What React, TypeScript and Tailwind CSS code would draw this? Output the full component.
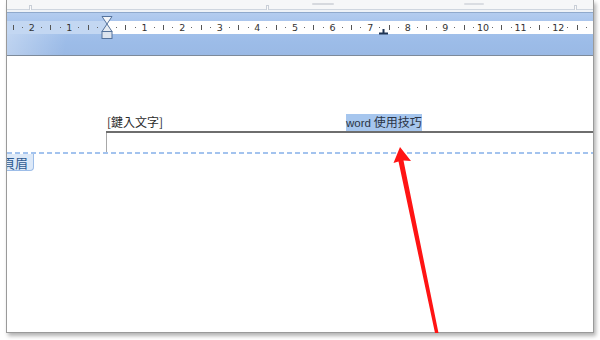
import React from "react";

const UNIT = 37.6;
const ORIGIN = 100; // relative to frame left edge

type Mark = { x: number; kind: "num" | "bar" | "dot"; label?: string };

function buildMarks(): Mark[] {
  const marks: Mark[] = [];
  for (let q = -11; q <= 52; q++) {
    if (q === 0) continue;
    const x = ORIGIN + (q * UNIT) / 4;
    if (x < 2 || x > 584) continue;
    const r = ((q % 4) + 4) % 4;
    if (r === 0) marks.push({ x, kind: "num", label: String(Math.abs(q / 4)) });
    else if (r === 2) marks.push({ x, kind: "bar" });
    else marks.push({ x, kind: "dot" });
  }
  return marks;
}

function Ruler() {
  const marks = buildMarks();
  return (
    <div className="h-[43px] flex flex-col bg-[linear-gradient(180deg,#b3ccef_0%,#a6c3ec_30%,#9cbce8_70%,#9ab9e5_100%)] border-b border-[#7d8a9a]">
      <div className="h-[8px]" />
      <div className="relative h-[13px] flex">
        <div className="w-[100px] bg-[#c3d7f2]" />
        <div className="flex-1 bg-white" />
        {marks.map((m, i) => (
          <div
            key={i}
            className="absolute top-0 h-[13px] w-[12px] -ml-[6px] flex items-center justify-center"
            style={{ left: m.x }}
          >
            {m.kind === "num" && (
              <span className="text-[9.5px] leading-none text-[#333] font-['DejaVu_Sans',sans-serif]">
                {m.label}
              </span>
            )}
            {m.kind === "bar" && <div className="w-px h-[5px] bg-[#555]" />}
            {m.kind === "dot" && <div className="w-px h-px bg-[#666]" />}
          </div>
        ))}
        {/* hanging indent marker */}
        <svg
          className="absolute top-[-5px] left-[94px]"
          width="12"
          height="24"
          viewBox="0 0 12 24"
        >
          <path d="M1 0.5 H11 L6 8 Z" fill="#f4f6f9" stroke="#55739c" strokeWidth="1" />
          <path d="M6 8 L11 15.5 H1 Z" fill="#e6ebf2" stroke="#55739c" strokeWidth="1" />
          <rect x="1" y="15.5" width="10" height="7" fill="#dde4ee" stroke="#55739c" strokeWidth="1" />
        </svg>
        {/* tab stop marker */}
        <svg className="absolute top-[8px] left-[372px]" width="9" height="6" viewBox="0 0 9 6">
          <rect x="3.5" y="0" width="2" height="4" fill="#1f3555" />
          <rect x="0" y="3.5" width="9" height="2" fill="#1f3555" />
        </svg>
      </div>
      <div className="flex-1 bg-[linear-gradient(100deg,rgba(255,255,255,0.35)_0px,rgba(255,255,255,0)_60px)]" />
    </div>
  );
}

function TopStrip() {
  const notches = [22, 259, 567];
  return (
    <div className="relative h-[13px] bg-[#f6f7f8] flex flex-col">
      <div className="h-[9px]" />
      <div className="h-px bg-[#cfd6df]" />
      <div className="flex-1 bg-[#eef2f7] border-b border-[#8fa9cc]" />
      {notches.map((x) => (
        <div
          key={x}
          className="absolute top-[5px] w-[3px] h-[5px] border border-b-0 border-[#c9cfd7] bg-[#fafafa]"
          style={{ left: x }}
        />
      ))}
      <div className="absolute top-[3px] left-[305px] w-[22px] h-[2px] rounded bg-[#d6d9de]" />
      <div className="absolute top-[3px] left-[457px] w-[20px] h-[2px] rounded bg-[#dadde2]" />
    </div>
  );
}

export default function App() {
  return (
    <div className="relative w-[600px] h-[340px] bg-white overflow-hidden font-['Liberation_Sans','Noto_Sans_CJK_TC',sans-serif]">
      <div className="ml-[6px] w-[588px] h-[333px] flex flex-col border-l border-r border-b border-[#9a9a9a] shadow-[2px_3px_4px_rgba(0,0,0,0.3)] bg-white">
        <TopStrip />
        <Ruler />
        <div className="flex-1 flex flex-col pt-[58px]">
          <div className="flex h-[16px] items-center pl-[100px] text-[12px] text-[#2b2b2b] font-['Noto_Sans_CJK_TC',sans-serif]">
            <div className="w-[239px] leading-[16px]">[鍵入文字]</div>
            <div className="bg-[#a6c6ee] leading-[16px] text-[#2a3445]">
              <span className="font-['Liberation_Sans',sans-serif] text-[11.5px]">word</span> 使用技巧
            </div>
          </div>
          <div className="ml-[99px] mt-px h-[2px] bg-[#6e6e6e]" />
          <div className="ml-[99px] w-px h-[19px] bg-[#a8a8a8]" />
          <div className="h-[2px] bg-[repeating-linear-gradient(90deg,#a3c3ee_0px,#a3c3ee_5px,#ffffff_5px,#ffffff_8px)]" />
          <div className="w-[27px] h-[17px] overflow-hidden bg-[#dde9f8] border border-t-0 border-l-0 border-[#9dbde8] rounded-br-[4px] flex items-center justify-end pr-[5px]">
            <span className="text-[13px] leading-none whitespace-nowrap text-[#2e5a90] font-['Noto_Sans_CJK_TC',sans-serif]">
              頁眉
            </span>
          </div>
        </div>
      </div>
      <svg className="absolute inset-0 pointer-events-none" width="600" height="340" viewBox="0 0 600 340">
        <polygon
          points="400,147 411,161 403.5,160.5 438.5,333 435,333 398.5,161.5 393.5,163"
          fill="#ff1414"
        />
      </svg>
    </div>
  );
}
